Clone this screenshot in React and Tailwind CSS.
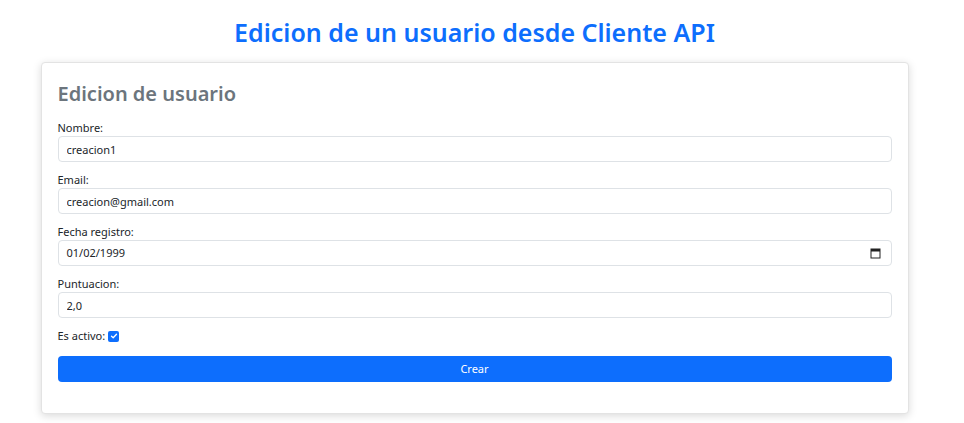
import React, { useState } from "react";

const font = { fontFamily: '"Noto Sans", "Open Sans", sans-serif' };

function Field({ label, children }) {
  return (
    <div className="mb-[10px]">
      <label className="block text-[11px] leading-[16px] text-[#212529]">{label}</label>
      {children}
    </div>
  );
}

export default function App() {
  const [form, setForm] = useState({
    nombre: "creacion1",
    email: "creacion@gmail.com",
    fecha: "1999-01-02",
    puntuacion: "2,0",
    activo: true,
  });

  const update = (key) => (e) => setForm({ ...form, [key]: e.target.value });

  const inputClass =
    "block w-full h-[26px] px-2 text-[11px] text-[#212529] bg-white border border-[#dee2e6] rounded-[4px] outline-none";

  return (
    <div className="min-h-screen bg-white" style={font}>
      <div className="w-[949px]">
        <h1 className="pt-[15px] text-center text-[25px] leading-[34px] font-semibold text-[#0d6efd]">
          Edicion de un usuario desde Cliente API
        </h1>

        {/* Card */}
        <div className="mx-auto mt-[13px] w-[868px] bg-white border border-[#e3e3e3] rounded-[4px] shadow-[0_2px_8px_rgba(0,0,0,0.15)] px-4 pt-4 pb-[31px]">
          <h2 className="text-[20px] leading-[29px] font-semibold text-[#6c757d] mb-3">Edicion de usuario</h2>

          <Field label="Nombre:">
            <input className={inputClass} value={form.nombre} onChange={update("nombre")} />
          </Field>

          <Field label="Email:">
            <input className={inputClass} value={form.email} onChange={update("email")} />
          </Field>

          <Field label="Fecha registro:">
            <div className={`${inputClass} flex items-center justify-between pr-[10px]`}>
              <span>01/02/1999</span>
              <svg width="11" height="11" viewBox="0 0 11 11">
                <rect x="1" y="1" width="9" height="9" fill="none" stroke="#222" strokeWidth="1" />
                <rect x="1" y="1" width="9" height="2.5" fill="#222" />
              </svg>
            </div>
          </Field>

          <Field label="Puntuacion:">
            <input className={inputClass} value={form.puntuacion} onChange={update("puntuacion")} />
          </Field>

          <div className="flex items-center gap-[3px] h-[16px] mb-[11px] text-[11px] text-[#212529]">
            <span>Es activo:</span>
            <button
              type="button"
              onClick={() => setForm({ ...form, activo: !form.activo })}
              className={`w-[11px] h-[11px] rounded-[2px] flex items-center justify-center ${form.activo ? "bg-[#0d6efd]" : "bg-white border border-[#adb5bd]"}`}
            >
              {form.activo && (
                <svg width="8" height="8" viewBox="0 0 8 8">
                  <path d="M1.5 4.2 L3.2 5.8 L6.5 2.2" fill="none" stroke="#fff" strokeWidth="1.3" strokeLinecap="round" strokeLinejoin="round" />
                </svg>
              )}
            </button>
          </div>

          <button className="w-full h-[26px] rounded-[4px] bg-[#0d6efd] text-white text-[11px]">Crear</button>
        </div>
      </div>
    </div>
  );
}
